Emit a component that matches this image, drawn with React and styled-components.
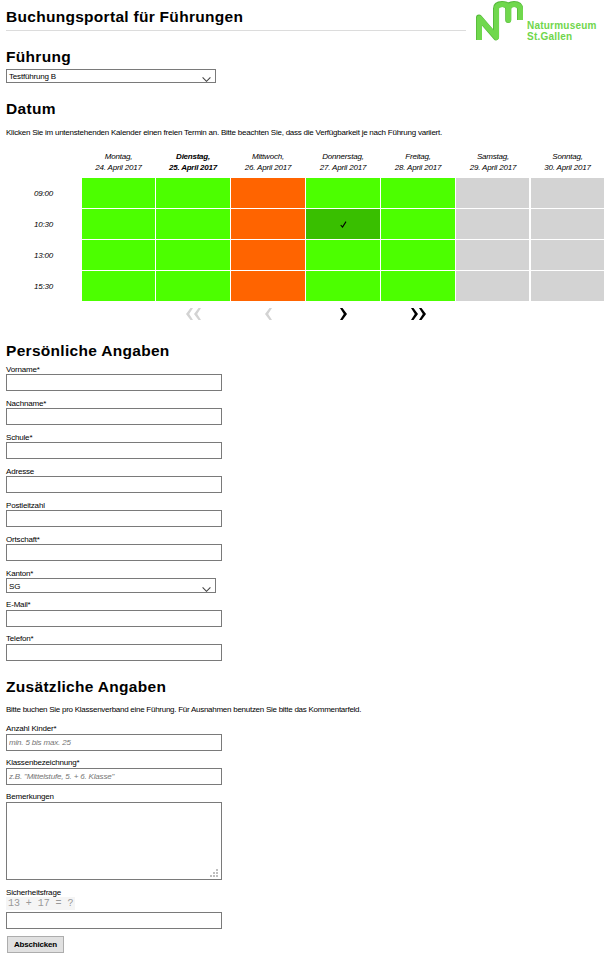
import React from "react";
import styled, { createGlobalStyle } from "styled-components";

const GlobalStyle = createGlobalStyle`
  *, *::before, *::after { box-sizing: border-box; }
  body {
    margin: 0;
    background: #fff;
    color: #000;
    font-family: "Liberation Sans", Arial, sans-serif;
    font-size: 8px;
    line-height: 10px;
    letter-spacing: -0.18px;
  }
  input, select, textarea, button { font: inherit; letter-spacing: inherit; color: inherit; }
`;

const Page = styled.div`
  width: 608px;
  height: 958px;
  padding: 0 4px 0 6px;
  overflow: hidden;
`;

const Header = styled.header`
  display: flex;
  justify-content: space-between;
  height: 47px;
`;

const Title = styled.h1`
  width: 460px;
  height: 31px;
  margin: 0;
  padding-top: 7px;
  border-bottom: 1px solid #dcdcdc;
  font-size: 15.5px;
  line-height: 20px;
  letter-spacing: 0.29px;
`;

const Logo = styled.div`
  display: flex;
  width: 130px;
  height: 46px;
  color: #70d64c;
`;

const LogoMark = styled.svg`
  flex: none;
  width: 53px;
  height: 44px;
`;

const LogoText = styled.div`
  padding-top: 20px;
  font-size: 10px;
  font-weight: bold;
  line-height: 11px;
  letter-spacing: 0.22px;
  white-space: nowrap;
`;

const Section = styled.section`
  height: ${(p) => p.$height}px;
`;

const Heading = styled.h2`
  height: 22px;
  margin: 0;
  font-size: 15.5px;
  line-height: 20px;
  letter-spacing: 0.3px;
`;

const Note = styled.p`
  margin: ${(p) => p.$margin};
  letter-spacing: ${(p) => p.$tracking}px;
  white-space: nowrap;
`;

const Calendar = styled.div`
  display: grid;
  grid-template-columns: 75px 73px repeat(5, 74px) 73px;
  grid-template-rows: 26px repeat(4, 30px) 25px;
  gap: 1px;
  text-align: center;
`;

const DayHead = styled.div`
  font-style: italic;
  font-weight: ${(p) => (p.$today ? "bold" : "normal")};
  letter-spacing: ${(p) => (p.$today ? "-0.25px" : "-0.2px")};
  line-height: 11px;
  white-space: pre-line;
`;

const TimeHead = styled.div`
  display: flex;
  align-items: center;
  justify-content: center;
  padding-top: 2px;
  font-style: italic;
`;

const slotColors = { free: "#4cff00", busy: "#ff6400", closed: "#d3d3d3", chosen: "#39bf00" };

const Slot = styled.div`
  display: flex;
  align-items: center;
  justify-content: center;
  margin-right: ${(p) => (p.$inset ? 1 : 0)}px;
  background: ${(p) => slotColors[p.$state]};
`;

const Pager = styled.div`
  padding-top: 6px;
  color: ${(p) => (p.$off ? "#d3d3d3" : "#000")};
  svg { display: block; margin: 0 auto; }
`;

const Fields = styled.div`
  padding-top: 1px;
`;

const Field = styled.label`
  display: block;
  margin-bottom: 7px;
`;

const Caption = styled.span`
  display: block;
  height: 10px;
  line-height: ${(p) => (p.$raised ? 10 : 12)}px;
`;

const Input = styled.input`
  display: block;
  width: 216px;
  height: 17px;
  padding: 0 2px;
  border: 1px solid #7a7a7a;
  border-radius: 0;
  background: #fff;
  &::placeholder { color: #757575; font-style: italic; opacity: 1; }
`;

const SelectBox = styled.div`
  display: flex;
  align-items: flex-end;
  justify-content: space-between;
  width: 210px;
  height: ${(p) => p.$height}px;
  padding: 0 4px 0 2px;
  border: 1px solid #7a7a7a;
  line-height: 11px;
`;

const TextBox = styled.div`
  display: flex;
  align-items: flex-end;
  justify-content: flex-end;
  width: 216px;
  height: 78px;
  padding: 2px 3px;
  border: 1px solid #7a7a7a;
`;

const Captcha = styled.code`
  display: block;
  width: 69px;
  height: 13px;
  margin: 0 0 2px;
  padding-left: 2px;
  background: #f5f5f5;
  color: #999;
  font-family: "Liberation Mono", monospace;
  font-size: 10px;
  line-height: 13px;
  letter-spacing: -0.06px;
  white-space: nowrap;
`;

const Submit = styled.button`
  display: block;
  width: 57px;
  height: 17px;
  margin-left: 1px;
  padding: 1px 0 0;
  border: 1px solid #adadad;
  background: #e1e1e1;
  font-weight: bold;
`;

const days = [
  ["Montag", 24, "free"],
  ["Dienstag", 25, "free"],
  ["Mittwoch", 26, "busy"],
  ["Donnerstag", 27, "free"],
  ["Freitag", 28, "free"],
  ["Samstag", 29, "closed"],
  ["Sonntag", 30, "closed"],
];
const times = ["09:00", "10:30", "13:00", "15:30"];
const personal = ["Vorname*", "Nachname*", "Schule*", "Adresse", "Postleitzahl", "Ortschaft*"];

function Dropdown({ value, height }) {
  return (
    <SelectBox $height={height}>
      {value}
      <svg width="9" height="5" viewBox="0 0 9 5" fill="none" stroke="#444" strokeWidth="1.1">
        <path d="M.6 .4 4.5 4.3 8.4 .4" />
      </svg>
    </SelectBox>
  );
}

function TextField({ label, placeholder, raised }) {
  return (
    <Field>
      <Caption $raised={raised}>{label}</Caption>
      <Input placeholder={placeholder} />
    </Field>
  );
}

function Arrow({ double, back, off }) {
  const shape = "M0 0H2.5L7 6 2.5 12H0L3.8 6Z";
  const width = double ? 15 : 7;
  return (
    <Pager $off={off}>
      <svg width={width} height="12" viewBox={`0 0 ${width} 12`} fill="currentColor">
        <g transform={back ? `translate(${width} 0) scale(-1 1)` : undefined}>
          <path d={shape} />
          {double && <path d={shape} transform="translate(8 0)" />}
        </g>
      </svg>
    </Pager>
  );
}

export default function App() {
  return (
    <Page>
      <GlobalStyle />
      <Header>
        <Title>Buchungsportal für Führungen</Title>
        <Logo>
          <LogoMark viewBox="0 0 53 44" fill="none" strokeLinejoin="round">
            <path d="M5 40V17.5L22 37.2V8.5Q22 4 28 4Q34.2 4 34.2 9V20V9Q34.2 4 40 4Q46 4 46 9V20" stroke="#55b83a" strokeWidth="6" />
            <path d="M5.4 40V18L22.5 37.2V9Q22.5 4.5 28.3 4.5Q34.6 4.5 34.6 9.5V20V9.5Q34.6 4.5 40.3 4.5Q46.4 4.5 46.4 9.5V20" stroke="#70d84d" strokeWidth="5.2" />
          </LogoMark>
          <LogoText>Naturmuseum<br />St.Gallen</LogoText>
        </Logo>
      </Header>
      <Section $height={52}>
        <Heading>Führung</Heading>
        <Dropdown value="Testführung B" height={14} />
      </Section>
      <Section $height={242}>
        <Heading>Datum</Heading>
        <Note $margin="7px 0 13px" $tracking={-0.235}>
          Klicken Sie im untenstehenden Kalender einen freien Termin an. Bitte beachten Sie, dass die Verfügbarkeit je nach Führung variiert.
        </Note>
        <Calendar>
          <div />
          {days.map(([name, date]) => (
            <DayHead key={name} $today={date === 25}>{`${name},\n${date}. April 2017`}</DayHead>
          ))}
          {times.map((time) => (
            <React.Fragment key={time}>
              <TimeHead>{time}</TimeHead>
              {days.map(([name, date, state]) => {
                const chosen = date === 27 && time === "10:30";
                return (
                  <Slot key={name} $state={chosen ? "chosen" : state} $inset={date === 29}>
                    {chosen && (
                      <svg width="7" height="7" viewBox="0 0 7 7" fill="none" stroke="#000">
                        <path d="M.7 4 2.5 6 6 .6" strokeWidth="1.1" />
                      </svg>
                    )}
                  </Slot>
                );
              })}
            </React.Fragment>
          ))}
          <div />
          <div />
          <Arrow double back off />
          <Arrow back off />
          <Arrow />
          <Arrow double />
        </Calendar>
      </Section>
      <Section $height={336}>
        <Heading>Persönliche Angaben</Heading>
        <Fields>
          {personal.map((label) => <TextField key={label} label={label} />)}
          <Field>
            <Caption>Kanton*</Caption>
            <Dropdown value="SG" height={15} />
          </Field>
          <TextField raised label="E-Mail*" />
          <TextField raised label="Telefon*" />
        </Fields>
      </Section>
      <Section $height={281}>
        <Heading>Zusätzliche Angaben</Heading>
        <Note $margin="6px 0 9px" $tracking={-0.265}>
          Bitte buchen Sie pro Klassenverband eine Führung. Für Ausnahmen benutzen Sie bitte das Kommentarfeld.
        </Note>
        <TextField raised label="Anzahl Kinder*" placeholder="min. 5 bis max. 25" />
        <TextField raised label="Klassenbezeichnung*" placeholder={'z.B. "Mittelstufe, 5. + 6. Klasse"'} />
        <Field>
          <Caption $raised>Bemerkungen</Caption>
          <TextBox>
            <svg width="8" height="8" viewBox="0 0 8 8" fill="#bfbfbf" shapeRendering="crispEdges">
              <path d="M6 0h2v2h-2zM3 3h2v2h-2zM6 3h2v2h-2zM0 6h2v2h-2zM3 6h2v2h-2zM6 6h2v2h-2z" />
            </svg>
          </TextBox>
        </Field>
        <Field>
          <Caption>Sicherheitsfrage</Caption>
          <Captcha>13 + 17 = ?</Captcha>
          <Input />
        </Field>
        <Submit>Abschicken</Submit>
      </Section>
    </Page>
  );
}
